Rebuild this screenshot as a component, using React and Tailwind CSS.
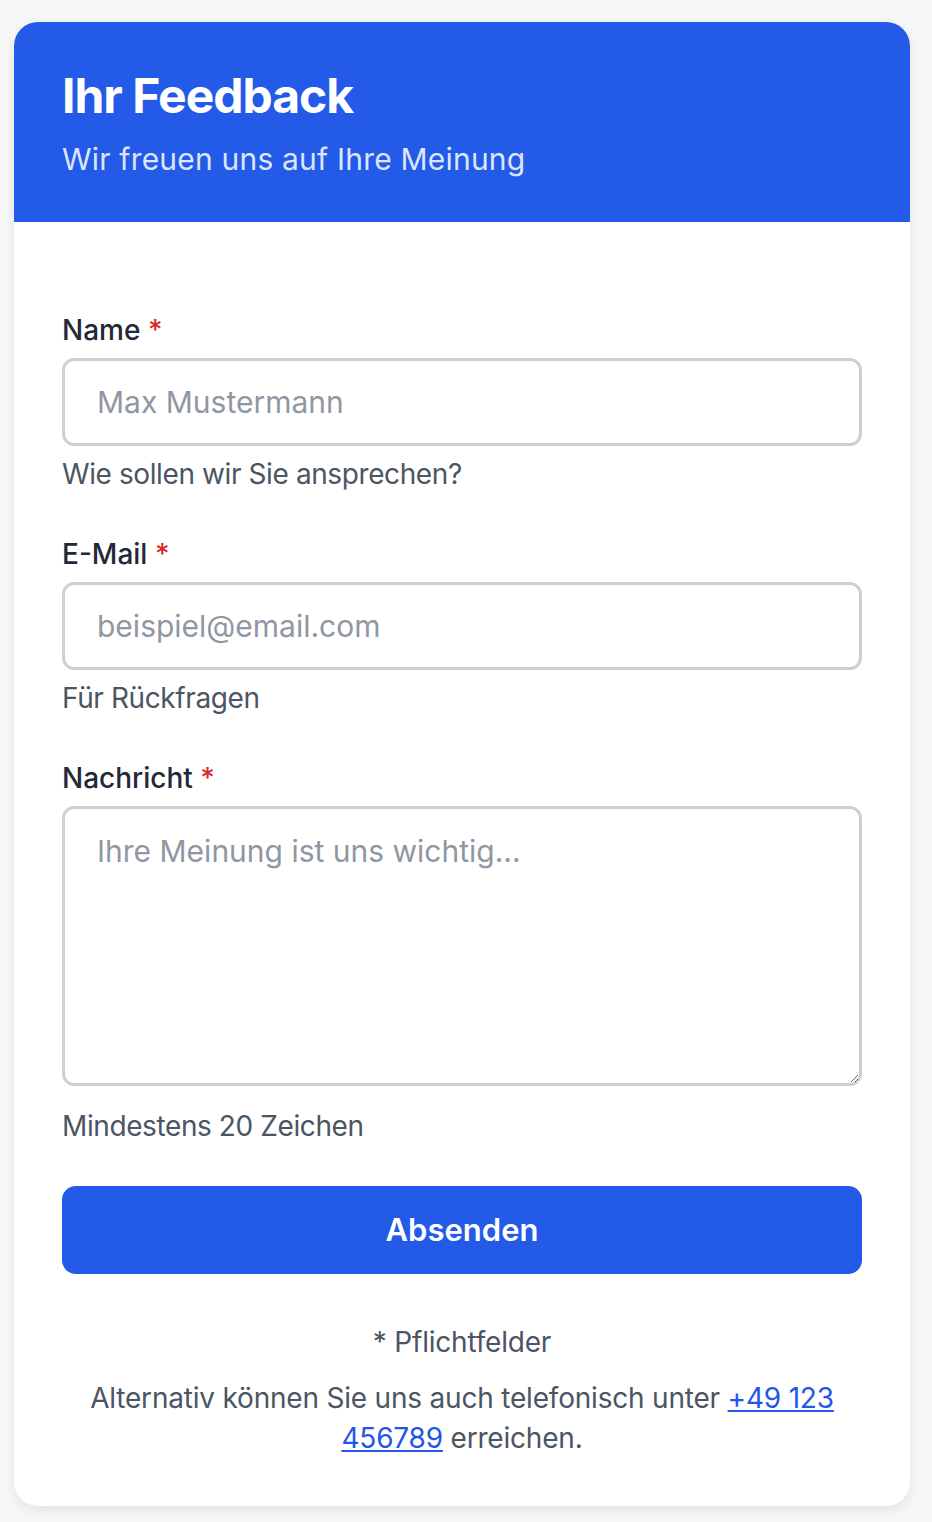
import { useState } from 'react';

export default function App() {
  const [form, setForm] = useState({ name: '', email: '', message: '' });

  const handleChange = (e) => {
    setForm({ ...form, [e.target.name]: e.target.value });
  };

  const handleSubmit = (e) => {
    e.preventDefault();
  };

  return (
    <div className="min-h-[1522px] bg-[#f5f6f8] pt-[22px] pl-[14px] font-['Inter',sans-serif]">
      <div className="w-[896px] overflow-hidden rounded-[24px] bg-white shadow-[0_4px_12px_rgba(0,0,0,0.08)]">
        <div className="bg-[#235ae8] px-[48px] pt-[46px] pb-[43px]">
          <h1 className="text-[48px] leading-[56px] font-bold tracking-[-1px] text-white">Ihr Feedback</h1>
          <p className="mt-[15px] text-[30px] leading-[40px] tracking-[0.2px] text-[#dbe6fd]">Wir freuen uns auf Ihre Meinung</p>
        </div>

        <form onSubmit={handleSubmit} className="px-[48px] pt-[88px] pb-[48px]">
          <div className="flex flex-col gap-[40px]">
            <Field label="Name" hint="Wie sollen wir Sie ansprechen?">
              <input
                type="text"
                name="name"
                value={form.name}
                onChange={handleChange}
                placeholder="Max Mustermann"
                className="block h-[88px] w-full rounded-[12px] border-[3px] border-[#cbd0d7] px-[32px] text-[30px] text-[#1f2937] outline-none placeholder:text-[#8f97a3]"
              />
            </Field>
            <Field label="E-Mail" hint="Für Rückfragen">
              <input
                type="email"
                name="email"
                value={form.email}
                onChange={handleChange}
                placeholder="beispiel@email.com"
                className="block h-[88px] w-full rounded-[12px] border-[3px] border-[#cbd0d7] px-[32px] text-[30px] text-[#1f2937] outline-none placeholder:text-[#8f97a3]"
              />
            </Field>
            <Field label="Nachricht" hint="Mindestens 20 Zeichen" gap="mt-[20px]">
              <textarea
                name="message"
                value={form.message}
                onChange={handleChange}
                placeholder="Ihre Meinung ist uns wichtig..."
                className="block h-[280px] w-full rounded-[12px] border-[3px] border-[#cbd0d7] px-[32px] py-[20px] text-[30px] leading-[44px] text-[#1f2937] outline-none placeholder:text-[#8f97a3]"
              />
            </Field>
          </div>

          <button
            type="submit"
            className="mt-[40px] h-[88px] w-full rounded-[14px] bg-[#235ae8] text-[31px] font-semibold text-white"
          >
            Absenden
          </button>

          <p className="mt-[48px] text-center text-[28px] leading-[40px] tracking-[-0.2px] text-[#4b5563]">* Pflichtfelder</p>
          <p className="mt-[16px] text-center text-[28px] leading-[40px] tracking-[-0.2px] text-[#4b5563]">
            Alternativ können Sie uns auch telefonisch unter{' '}
            <a href="#" className="text-[#2356e6] underline">+49 123 456789</a> erreichen.
          </p>
        </form>
      </div>
    </div>
  );
}

function Field({ label, hint, gap = 'mt-[8px]', children }) {
  return (
    <div>
      <label className="mb-[8px] block text-[28px] leading-[40px] font-medium text-[#1f2937]">
        {label} <span className="text-[#dc2626]">*</span>
      </label>
      {children}
      <p className={`${gap} text-[28px] leading-[40px] tracking-[-0.4px] text-[#4b5563]`}>{hint}</p>
    </div>
  );
}
